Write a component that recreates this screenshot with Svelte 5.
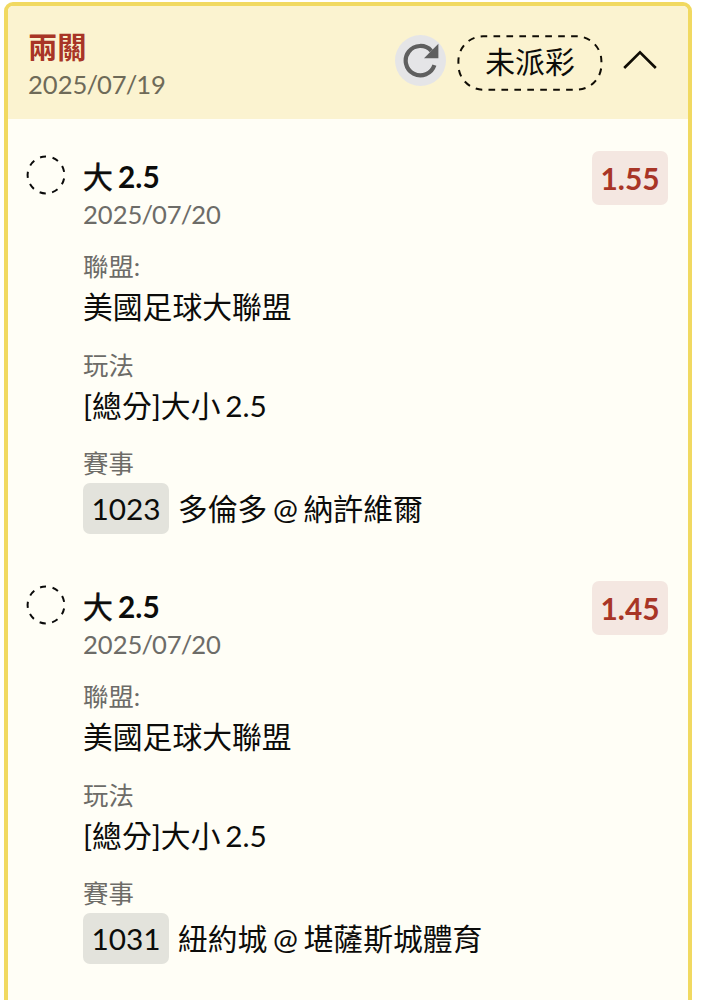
<script>
  let open = true;

  const ticket = {
    title: '兩關',
    date: '2025/07/19',
    status: '未派彩'
  };

  const bets = [
    {
      side: '大',
      line: '2.5',
      date: '2025/07/20',
      odds: '1.55',
      league: '美國足球大聯盟',
      play: '[總分]大小 2.5',
      code: '1023',
      match: '多倫多 @ 納許維爾'
    },
    {
      side: '大',
      line: '2.5',
      date: '2025/07/20',
      odds: '1.45',
      league: '美國足球大聯盟',
      play: '[總分]大小 2.5',
      code: '1031',
      match: '紐約城 @ 堪薩斯城體育'
    }
  ];
</script>

{#snippet dateText(value)}
  <div class="date">
    {#each value.split('/') as part, i}{#if i > 0}<span class="slash">/</span>{/if}{part}{/each}
  </div>
{/snippet}

<div class="card">
  <header class="card-header">
    <div class="heading">
      <h2>{ticket.title}</h2>
      {@render dateText(ticket.date)}
    </div>
    <button class="refresh" aria-label="refresh">
      <svg width="36" height="36" viewBox="0 0 36 36">
        <path d="M28.3 7.8A14.7 14.7 0 1 0 31.4 22.2" fill="none" stroke="#5f5f5f" stroke-width="4.2" />
        <path d="M35.4 0.8V15.2H21z" fill="#5f5f5f" />
      </svg>
    </button>
    <div class="status">
      <svg class="outline" width="146" height="56" viewBox="0 0 146 56">
        <path
          d="M36.5 1.3H120A24.8 24.8 0 0 1 144.4 26V30A24.8 24.8 0 0 1 120 54.7H26A24.8 24.8 0 0 1 1.4 30V26A24.8 24.8 0 0 1 26 1.3Z"
          fill="none" stroke="#100d05" stroke-width="2" pathLength="351" stroke-dasharray="6.7 6.3" />
      </svg>
      <span>{ticket.status}</span>
    </div>
    <button class="toggle" aria-label="toggle" on:click={() => (open = !open)}>
      <svg class:closed={!open} width="34" height="20" viewBox="0 0 34 20">
        <path d="M1.2 18L17 2.4L32.8 18" fill="none" stroke="#100d05" stroke-width="2.7" />
      </svg>
    </button>
  </header>

  {#if open}
    <div class="bets">
      {#each bets as bet}
        <section class="bet">
          <svg class="mark" width="40" height="40" viewBox="0 0 40 40">
            <circle cx="20" cy="20" r="18.4" fill="none" stroke="#0a0a0a" stroke-width="2"
              pathLength="108" stroke-dasharray="5.8 6.2" transform="rotate(171 20 20)" />
          </svg>
          <div class="detail">
            <div class="pick"><span class="side">{bet.side}</span> {bet.line}</div>
            {@render dateText(bet.date)}
            <dl>
              <dt>聯盟:</dt>
              <dd>{bet.league}</dd>
              <dt>玩法</dt>
              <dd>{bet.play}</dd>
              <dt>賽事</dt>
              <dd class="match"><span class="code">{bet.code}</span>{bet.match}</dd>
            </dl>
          </div>
          <div class="odds">{bet.odds}</div>
        </section>
      {/each}
    </div>
  {/if}
</div>

<style>
  :global(body) {
    background: #fff;
    overflow: hidden;
  }

  .card {
    box-sizing: border-box;
    width: 688px;
    height: 1020px;
    margin: 2px 0 0 4px;
    border: 4px solid #f1d961;
    border-radius: 9px;
    background: #fffef6;
    color: #0c0c0a;
    font-family: Lato, 'Noto Sans CJK TC', sans-serif;
    font-size: 29.8px;
    word-spacing: -2.8px;
    overflow: hidden;
  }

  .card-header {
    display: flex;
    align-items: center;
    box-sizing: border-box;
    height: 113px;
    padding: 0 31px 0 20px;
    background: #fbf3d0;
  }

  .heading {
    flex: 1;
    padding-top: 3px;
  }

  h2 {
    margin: 0;
    color: #a83526;
    font-size: 29.3px;
    font-weight: 700;
    line-height: 39px;
  }

  .date {
    color: #6d6c68;
    font-size: 25.6px;
    line-height: 36px;
  }

  .slash {
    margin: 0 -1px;
  }

  .card-header .date {
    color: #6e6a58;
  }

  button {
    display: flex;
    align-items: center;
    justify-content: center;
    padding: 0;
    border: none;
    background: none;
    cursor: pointer;
  }

  .refresh {
    width: 51px;
    height: 51px;
    margin: 0 11px 4px 0;
    border-radius: 50%;
    background: #e5e5e7;
  }

  .status {
    position: relative;
    width: 146px;
    height: 56px;
    margin-right: 20px;
    line-height: 54px;
    text-align: center;
  }

  .toggle {
    margin-bottom: 6px;
  }

  .outline {
    position: absolute;
    top: 0;
    left: 0;
  }

  .closed {
    transform: rotate(180deg);
  }

  .bets {
    padding: 38px 20px 0 18px;
  }

  .bet {
    display: flex;
    align-items: flex-start;
    height: 430px;
  }

  .mark {
    margin-top: -2px;
  }

  .detail {
    flex: 1;
    margin-left: 17px;
  }

  .pick {
    font-weight: 700;
    line-height: 40px;
    word-spacing: -2px;
  }

  .side {
    font-weight: 400;
    -webkit-text-stroke: 0.6px currentColor;
  }

  .detail .date {
    margin-top: -1px;
  }

  dl {
    margin: 16px 0 0;
  }

  dt {
    color: #6d6c68;
    font-size: 25.4px;
    line-height: 36px;
  }

  dd {
    margin: 0 0 16.5px;
    line-height: 45px;
    padding-bottom: 1px;
  }

  .match {
    display: flex;
    align-items: center;
    padding: 2px 0 0;
    line-height: 50px;
    word-spacing: -2px;
  }

  .code {
    width: 86px;
    height: 51px;
    margin-right: 9px;
    border-radius: 7px;
    background: #e3e3dc;
    line-height: 52px;
    text-align: center;
  }

  .odds {
    width: 76px;
    height: 54px;
    margin-top: -6px;
    border-radius: 7px;
    background: #f4e7e1;
    color: #a83526;
    font-weight: 700;
    line-height: 55px;
    text-align: center;
  }
</style>
